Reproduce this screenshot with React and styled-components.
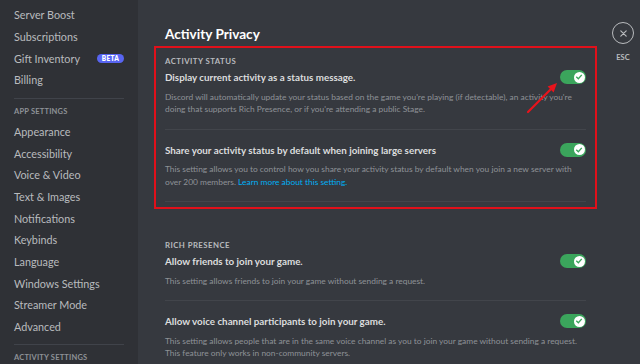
import React from "react";
import styled, { createGlobalStyle } from "styled-components";

const GlobalStyle = createGlobalStyle`
  html, body {
    margin: 0;
    padding: 0;
    background: #36393f;
  }
  body {
    font-family: Lato, "Noto Sans", sans-serif;
    -webkit-font-smoothing: antialiased;
  }
`;

const StyledPage = styled.div`
  position: relative;
  display: flex;
  width: 640px;
  height: 364px;
  overflow: hidden;
  background: #36393f;
`;

const StyledSidebar = styled.nav`
  flex: 0 0 138px;
  box-sizing: border-box;
  padding: 4px 14px 0 14px;
  background: #2f3136;
`;

const SideItem = styled.div`
  display: flex;
  align-items: center;
  justify-content: space-between;
  height: 21.67px;
  font-size: 10.8px;
  color: #b9bbbe;
  white-space: nowrap;
`;

const SideHeader = styled.div`
  height: 12px;
  line-height: 12px;
  margin-bottom: 3px;
  font-size: 7.5px;
  font-weight: 700;
  letter-spacing: 0.2px;
  color: #8e9297;
  text-transform: uppercase;
  white-space: nowrap;
`;

const SideSeparator = styled.div`
  height: 1px;
  margin: 7px 0 7px;
  background: #40434a;
`;

const Badge = styled.span`
  display: inline-flex;
  align-items: center;
  justify-content: center;
  width: 27px;
  height: 9px;
  border-radius: 5px;
  background: #5865f2;
  color: #fff;
  font-size: 6.5px;
  font-weight: 800;
  letter-spacing: 0.3px;
`;

const StyledMain = styled.main`
  flex: 1;
  display: flex;
  padding-left: 27px;
`;

const Content = styled.div`
  flex: 0 0 421px;
  padding-top: 24px;
`;

const Heading = styled.h2`
  margin: 0 0 2px;
  height: 20px;
  line-height: 20px;
  font-size: 13.6px;
  font-weight: 700;
  color: #fff;
`;

const Highlight = styled.section`
  margin: 0 -11px;
  padding: 5px 9px 5px;
  border: 2px solid #e0101a;
`;

const Group = styled.section`
  margin-top: ${(p) => p.$top || 0}px;
`;

const Label = styled.div`
  height: 12px;
  line-height: 12px;
  margin: 2px 0 2px;
  font-size: 7.8px;
  font-weight: 700;
  letter-spacing: 0.45px;
  color: #b9bbbe;
  text-transform: uppercase;
`;

const StyledSetting = styled.div`
  padding-bottom: 12.75px;
  border-bottom: ${(p) => (p.$last ? "none" : "1px solid #42454b")};
  & + & {
    margin-top: 12px;
  }
`;

const TitleRow = styled.div`
  display: flex;
  align-items: center;
  justify-content: space-between;
  height: 16px;
`;

const Title = styled.div`
  font-size: 9.8px;
  font-weight: 700;
  color: #dcddde;
`;

const Desc = styled.div`
  margin-top: 5.75px;
  font-size: 8.4px;
  line-height: 12.5px;
  color: #8e9297;

  a {
    color: #00aff4;
    text-decoration: none;
  }
`;

const StyledToggle = styled.div`
  position: relative;
  flex: 0 0 26px;
  height: 14px;
  border-radius: 7px;
  background: #3ba55c;

  .knob {
    position: absolute;
    top: 1.5px;
    right: 1.5px;
    width: 11px;
    height: 11px;
    border-radius: 50%;
    background: #fff;
    display: flex;
    align-items: center;
    justify-content: center;
  }
`;

const EscColumn = styled.div`
  margin-left: 26px;
  padding-top: 22px;
  display: flex;
  flex-direction: column;
  align-items: center;
  width: 22px;

  .circle {
    box-sizing: border-box;
    width: 22px;
    height: 22px;
    border-radius: 50%;
    border: 1.5px solid #b9bbbe;
    display: flex;
    align-items: center;
    justify-content: center;
  }

  .esc {
    margin-top: 9px;
    font-size: 7.5px;
    font-weight: 700;
    color: #b9bbbe;
  }
`;

const Arrow = styled.svg`
  position: absolute;
  left: 520px;
  top: 78px;
`;

const Toggle = () => (
  <StyledToggle>
    <div className="knob">
      <svg width="8" height="8" viewBox="0 0 10 10">
        <path
          d="M2.2 5.2 L4.2 7.2 L7.9 3"
          fill="none"
          stroke="#3ba55c"
          strokeWidth="1.7"
          strokeLinecap="square"
        />
      </svg>
    </div>
  </StyledToggle>
);

const Setting = ({ title, children, last }) => (
  <StyledSetting $last={last}>
    <TitleRow>
      <Title>{title}</Title>
      <Toggle />
    </TitleRow>
    <Desc>{children}</Desc>
  </StyledSetting>
);

const Sidebar = () => (
  <StyledSidebar>
    <SideItem>Server Boost</SideItem>
    <SideItem>Subscriptions</SideItem>
    <SideItem>
      Gift Inventory <Badge>BETA</Badge>
    </SideItem>
    <SideItem>Billing</SideItem>
    <SideSeparator />
    <SideHeader>App Settings</SideHeader>
    {[
      "Appearance",
      "Accessibility",
      "Voice & Video",
      "Text & Images",
      "Notifications",
      "Keybinds",
      "Language",
      "Windows Settings",
      "Streamer Mode",
      "Advanced",
    ].map((name) => (
      <SideItem key={name}>{name}</SideItem>
    ))}
    <SideSeparator />
    <SideHeader>Activity Settings</SideHeader>
  </StyledSidebar>
);

const App = () => {
  return (
    <StyledPage>
      <GlobalStyle />
      <Sidebar />
      <StyledMain>
        <Content>
          <Heading>Activity Privacy</Heading>
          <Highlight>
            <Label>Activity Status</Label>
            <Setting title="Display current activity as a status message.">
              Discord will automatically update your status based on the game
              you're playing (if detectable), an activity you're doing that
              supports Rich Presence, or if you're attending a public Stage.
            </Setting>
            <Setting title="Share your activity status by default when joining large servers">
              This setting allows you to control how you share your activity
              status by default when you join a new server with over 200
              members. <a href="#">Learn more about this setting.</a>
            </Setting>
          </Highlight>
          <Group $top={30}>
            <Label>Rich Presence</Label>
            <Setting title="Allow friends to join your game.">
              This setting allows friends to join your game without sending a
              request.
            </Setting>
            <Setting title="Allow voice channel participants to join your game." last>
              This setting allows people that are in the same voice channel as
              you to join your game without sending a request. This feature
              only works in non-community servers.
            </Setting>
          </Group>
        </Content>
        <EscColumn>
          <div className="circle">
            <svg width="9" height="9" viewBox="0 0 10 10">
              <path
                d="M2 2 L8 8 M8 2 L2 8"
                stroke="#b9bbbe"
                strokeWidth="1.3"
                strokeLinecap="round"
              />
            </svg>
          </div>
          <div className="esc">ESC</div>
        </EscColumn>
      </StyledMain>
      <Arrow width="45" height="40" viewBox="0 0 45 40">
        <line
          x1="8"
          y1="34"
          x2="31"
          y2="11"
          stroke="#e8141c"
          strokeWidth="2.2"
          strokeLinecap="round"
        />
        <polygon points="37,5 33.6,14.4 27.6,8.4" fill="#e8141c" />
      </Arrow>
    </StyledPage>
  );
};

export default App;
